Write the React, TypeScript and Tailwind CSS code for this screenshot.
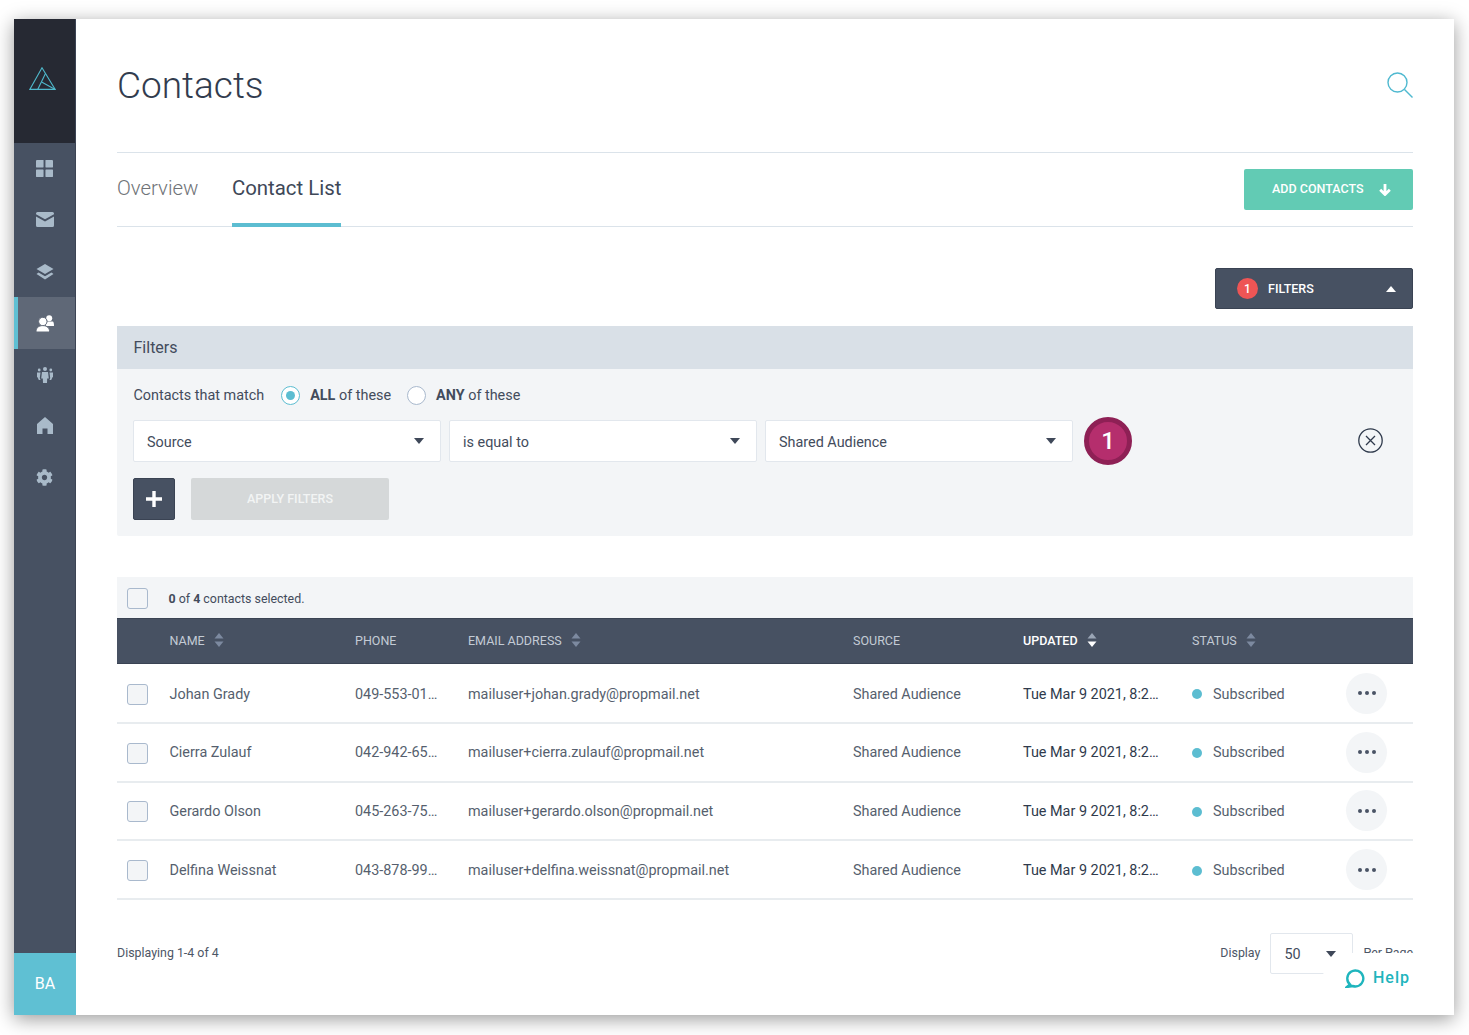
import { FaCog } from 'react-icons/fa';

const rows = [
  { name: 'Johan Grady', phone: '049-553-01…', email: 'mailuser+johan.grady@propmail.net' },
  { name: 'Cierra Zulauf', phone: '042-942-65…', email: 'mailuser+cierra.zulauf@propmail.net' },
  { name: 'Gerardo Olson', phone: '045-263-75…', email: 'mailuser+gerardo.olson@propmail.net' },
  { name: 'Delfina Weissnat', phone: '043-878-99…', email: 'mailuser+delfina.weissnat@propmail.net' },
];

const Caret = ({ className }: { className: string }) => (
  <svg viewBox="0 0 10 6" className={className} fill="currentColor">
    <path d="M0 0h10L5 6z" />
  </svg>
);

const Sort = ({ up, down }: { up: string; down: string }) => (
  <svg viewBox="0 0 10 16" className="-mt-[2px] h-4 w-2.5">
    <path d="M5 1l4.5 5.5h-9z" className={up} fill="currentColor" />
    <path d="M5 15L.5 9.5h9z" className={down} fill="currentColor" />
  </svg>
);

const SideItem = ({ children, active }: { children: React.ReactNode; active?: boolean }) => (
  <div
    className={
      active
        ? 'flex h-[52px] items-center justify-center border-l-[4px] border-[#5fc0d3] bg-[#5f6877] pr-[4px] text-white'
        : 'flex h-[51.4px] items-center justify-center text-[#a9bac9]'
    }
  >
    {children}
  </div>
);

const Select = ({ label }: { label: string }) => (
  <div className="flex h-[42px] w-[308px] items-center justify-between rounded-[2px] border border-[#e2e7ed] bg-white pl-[13px] pr-[16px] text-[14.4px] text-[#434c5c]">
    <span className="pt-[4px]">{label}</span>
    <Caret className="h-[6px] w-[10px] text-[#3f4859]" />
  </div>
);

const Checkbox = () => (
  <div className="h-[21px] w-[21px] rounded-[3px] border-[1.5px] border-[#a9b9cd] bg-[#f3f5f7]" />
);

const App = () => {
  return (
    <div className="h-[1035px] w-[1469px] overflow-hidden bg-white pl-[14px] pt-[19px] font-['Roboto',sans-serif]">
      <div className="flex h-[996px] w-[1440px] bg-white shadow-[0_4px_18px_rgba(0,0,0,0.4)]">
        <aside className="flex w-[62px] shrink-0 flex-col border-r border-[#3c4454] bg-[#475162]">
          <div className="flex h-[124px] items-center justify-center bg-[#262933] pb-[6px] pr-[4px]">
            <svg viewBox="0 0 27 23" className="h-[23px] w-[27px]" fill="none" stroke="#4fb9cc" strokeWidth="1.1">
              <path d="M13 .8L.8 22.4h25.4z" />
              <path d="M16.500 6.500L8.700 22.400" />
              <path d="M12.600 15l13.600 7.400" />
            </svg>
          </div>
          <SideItem>
            <svg viewBox="0 0 18 18" className="h-[17px] w-[17px]" fill="currentColor">
              <rect x="0" y="0" width="8" height="8" rx="0.5" />
              <rect x="10" y="0" width="8" height="8" rx="0.5" />
              <rect x="0" y="10" width="8" height="8" rx="0.5" />
              <rect x="10" y="10" width="8" height="8" rx="0.5" />
            </svg>
          </SideItem>
          <SideItem>
            <svg viewBox="0 0 18 15" className="-mt-[1px] h-[15px] w-[18px]" fill="currentColor">
              <path d="M0 1.500A1.500 1.500 0 011.500 0h15A1.500 1.500 0 0118 1.500v.7L9 7.300 0 2.200z" />
              <path d="M0 4.400l9 5.100 9-5.100v9.100a1.500 1.500 0 01-1.500 1.500h-15A1.500 1.500 0 010 13.500z" />
            </svg>
          </SideItem>
          <SideItem>
            <svg viewBox="0 0 18 16" className="mt-[1px] h-[16px] w-[18px]" fill="currentColor">
              <path d="M9 0l8.500 5L9 10 .5 5z" />
              <path d="M2.600 8.600L9 12.300l6.400-3.700 2.100 1.400L9 15.600.5 10z" />
            </svg>
          </SideItem>
          <SideItem active>
            <svg viewBox="0 0 18 17" className="h-[17px] w-[18px]" fill="currentColor">
              <circle cx="13.200" cy="3.200" r="3" />
              <path d="M9.500 6.500h7.500c.8 1 1 2.500 1 4.500h-8z" />
              <g stroke="#5f6877" strokeWidth="1">
                <circle cx="6.800" cy="6.500" r="4.200" />
                <path d="M0 17c0-4 2.400-6.400 6.800-6.400s6.800 2.400 6.800 6.400z" />
              </g>
            </svg>
          </SideItem>
          <SideItem>
            <svg viewBox="0 0 18 16" className="h-[16px] w-[18px]" fill="currentColor">
              <circle cx="9" cy="2" r="2" />
              <path d="M6 5h6l.8 6.500h-1.600L11 16H7l-.2-4.500H5.200z" />
              <circle cx="3.200" cy="3" r="1.400" />
              <circle cx="14.800" cy="3" r="1.400" />
              <path d="M1 5.500h3.500L3.800 11l.7 2H2.800L1.700 10.500 1 10zM17 5.500h-3.500l.7 5.500-.7 2h1.700l1.100-2.500.7-.5z" />
            </svg>
          </SideItem>
          <SideItem>
            <svg viewBox="0 0 16 17" className="-mt-[1px] h-[17px] w-[16px]" fill="currentColor">
              <path d="M8 0l8 7v10h-5.500v-5.500h-5V17H0V7z" />
            </svg>
          </SideItem>
          <SideItem>
            <FaCog className="h-[17px] w-[17px]" />
          </SideItem>
          <div className="mt-auto -mr-px flex h-[62px] items-center justify-center bg-[#5fc0d3] text-[16px] text-white">BA</div>
        </aside>

        <main className="relative flex min-w-0 flex-1 flex-col px-[41px]">
          <header className="flex h-[134px] items-start justify-between border-b border-[#dbe3ea] pt-[41px]">
            <h1 className="text-[37px] font-light leading-[52px] text-[#323c4e]">Contacts</h1>
            <svg viewBox="0 0 26 26" className="mt-[12px] h-[26px] w-[26px]" fill="none" stroke="#4fb9d0" strokeWidth="1.400">
              <circle cx="10.500" cy="10.500" r="9.500" />
              <path d="M17.500 17.500l8 8" />
            </svg>
          </header>

          <nav className="flex h-[74px] items-stretch justify-between border-b border-[#dbe3ea]">
            <div className="flex gap-[33.500px] text-[20.400px] font-light">
              <span className="pt-[20px] text-[#6f7377]">Overview</span>
              <span className="-mb-px border-b-[4px] border-[#5cbdd1] pt-[20px] font-normal text-[#3e4858]">Contact List</span>
            </div>
            <button className="mt-[16px] flex h-[41px] w-[169px] items-center gap-[15px] rounded-[2px] bg-[#62cbb4] pl-[28px] text-[12.500px] font-medium text-white">
              ADD CONTACTS
              <svg viewBox="0 0 12 12" className="h-[12px] w-[12px]" fill="none" stroke="currentColor" strokeWidth="2.800">
                <path d="M6 0v10M1.200 5.800L6 10.500l4.800-4.700" />
              </svg>
            </button>
          </nav>

          <div className="flex justify-end pt-[41px]">
            <button className="flex h-[41px] w-[198px] items-center rounded-[2px] border border-[#3a4353] bg-[#475162] pl-[21px] pr-[16px] text-[12.500px] font-medium text-white">
              <span className="flex h-[21px] w-[21px] items-center justify-center rounded-full bg-[#ee5555] text-[12px]">1</span>
              <span className="ml-[10px] pt-[2px]">FILTERS</span>
              <Caret className="ml-auto h-[6px] w-[10px] rotate-180" />
            </button>
          </div>

          <section className="mt-[17px] rounded-[2px] bg-[#f3f5f7]">
            <div className="flex h-[43px] items-center bg-[#d9e0e7] px-[16.500px] text-[16px] text-[#434c5c]">Filters</div>
            <div className="relative h-[167px] px-[16px] text-[14.400px] text-[#434c5c]">
              <div className="flex h-[51px] items-center pt-[3px]">
                <span className="pl-[0.500px]">Contacts that match</span>
                <span className="-mt-[2px] ml-[17px] flex h-[19px] w-[19px] items-center justify-center rounded-full border-[1.500px] border-[#5cbdd1] bg-white">
                  <span className="h-[9px] w-[9px] rounded-full bg-[#5cbdd1]" />
                </span>
                <span className="ml-[10px]"><b className="font-bold">ALL</b> of these</span>
                <span className="-mt-[2px] ml-[16px] h-[19px] w-[19px] rounded-full border-[1.500px] border-[#a9b9cd] bg-white" />
                <span className="ml-[10px]"><b className="font-bold">ANY</b> of these</span>
              </div>
              <div className="flex items-center gap-[8px]">
                <Select label="Source" />
                <Select label="is equal to" />
                <Select label="Shared Audience" />
              </div>
              <div className="mt-[16px] flex gap-[16px]">
                <button className="flex h-[42px] w-[42px] items-center justify-center rounded-[2px] border border-[#3a4353] bg-[#475162]">
                  <svg viewBox="0 0 16 16" className="h-[16px] w-[16px]" fill="white">
                    <path d="M6.300 0h3.400v6.300H16v3.400H9.700V16H6.300V9.700H0V6.300h6.300z" />
                  </svg>
                </button>
                <button className="h-[42px] w-[198px] rounded-[2px] bg-[#d5d8d9] text-[12.500px] font-medium text-[#f2f4f4]">APPLY FILTERS</button>
              </div>
              <div className="absolute left-[967px] top-[48px] flex h-[48px] w-[48px] items-center justify-center rounded-full border-[5px] border-[#8e2055] bg-[#b52e6d] text-[24px] font-medium text-white">1</div>
              <svg viewBox="0 0 25 25" className="absolute left-[1240.500px] top-[59px] h-[25px] w-[25px]" fill="none" stroke="#2f3a4c" strokeWidth="1.300">
                <circle cx="12.500" cy="12.500" r="11.700" />
                <path d="M8 8l9 9M17 8l-9 9" />
              </svg>
            </div>
          </section>

          <div className="mt-[41px] flex h-[41px] items-center gap-[20.500px] bg-[#f3f5f7] pl-[10px] pt-[2px] text-[12.400px] text-[#434c5c]">
            <Checkbox />
            <span className="pt-[2px]"><b className="font-bold">0</b> of <b className="font-bold">4</b> contacts selected.</span>
          </div>

          <div className="grid h-[46px] grid-cols-[52.500px_185.500px_113px_385px_170px_169px_1fr] items-center border-y border-[#3a4353] bg-[#475162] text-[12.500px] text-[#c3cbd5]">
            <span />
            <span className="flex items-center gap-[9px]">NAME<Sort up="text-[#7d8aa0]" down="text-[#7d8aa0]" /></span>
            <span>PHONE</span>
            <span className="flex items-center gap-[9px]">EMAIL ADDRESS<Sort up="text-[#7d8aa0]" down="text-[#7d8aa0]" /></span>
            <span>SOURCE</span>
            <span className="flex items-center gap-[9px] font-medium text-white">UPDATED<Sort up="text-[#9aa5b5]" down="text-white" /></span>
            <span className="flex items-center gap-[9px]">STATUS<Sort up="text-[#7d8aa0]" down="text-[#7d8aa0]" /></span>
          </div>

          <div className="mt-[1px]">
            {rows.map(row => (
              <div
                key={row.email}
                className="grid h-[58.750px] grid-cols-[52.500px_185.500px_113px_385px_170px_169px_1fr] items-center border-b-2 border-[#e8ecef] pt-[2px] text-[14.400px] text-[#565f6e]"
              >
                <span className="pl-[10px]"><Checkbox /></span>
                <span>{row.name}</span>
                <span>{row.phone}</span>
                <span>{row.email}</span>
                <span>Shared Audience</span>
                <span className="text-[#2f3a4c]">Tue Mar 9 2021, 8:2…</span>
                <div className="flex items-center">
                  <span className="h-[10px] w-[10px] rounded-full bg-[#5cbdd1]" />
                  <span className="ml-[11px]">Subscribed</span>
                  <span className="-mt-[2px] ml-auto mr-[26px] flex h-[41px] w-[41px] items-center justify-center gap-[3px] rounded-full bg-[#f3f5f7]">
                    <span className="h-[4px] w-[4px] rounded-full bg-[#4a5365]" />
                    <span className="h-[4px] w-[4px] rounded-full bg-[#4a5365]" />
                    <span className="h-[4px] w-[4px] rounded-full bg-[#4a5365]" />
                  </span>
                </div>
              </div>
            ))}
          </div>

          <footer className="mt-[33px] flex h-[41px] items-center justify-between text-[12.400px] text-[#4d5666]">
            <span>Displaying 1-4 of 4</span>
            <div className="flex items-center">
              <span>Display</span>
              <div className="ml-[10px] flex h-[41px] w-[83px] items-center justify-between rounded-[2px] border border-[#e2e7ed] pl-[13px] pr-[16px] text-[14.400px] text-[#434c5c]">
                <span className="pt-[2px]">50</span>
                <Caret className="h-[6px] w-[10px] text-[#3f4859]" />
              </div>
              <span className="ml-[10px]">Per Page</span>
            </div>
          </footer>

          <div className="absolute bottom-[15px] right-[41px] flex h-[47px] w-[90px] items-center gap-[8px] rounded-tl-[24px] bg-white pl-[22px] pt-[2px] text-[16px] font-medium tracking-[1px] text-[#1fb5bd]">
            <svg viewBox="0 0 20 20" className="h-[20px] w-[20px] shrink-0" fill="none" stroke="#1fb5bd" strokeWidth="2.400">
              <path d="M5 16.500A8 8 0 1110.500 18.500c-1 0-2-.2-2.900-.5L2 19z" />
            </svg>
            Help
          </div>
        </main>
      </div>
    </div>
  );
};

export default App;
